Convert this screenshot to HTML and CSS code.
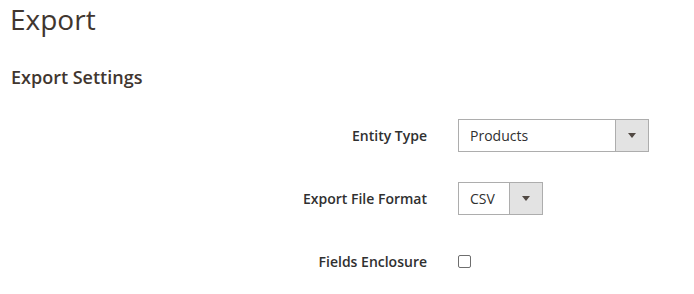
FILE: index.html
```html
<!DOCTYPE html>
<html lang="en">
<head>
    <meta charset="UTF-8">
    <title>Export</title>
    <link rel="stylesheet" href="styles.css">
</head>
<body>
    <h1 class="page-title">Export</h1>
    <div class="settings">
        <div class="legend">Export Settings</div>
        <div class="field">
            <label class="label">Entity Type</label>
            <div class="select select-wide">
                <span class="select-value">Products</span>
                <span class="select-button"><span class="arrow"></span></span>
            </div>
        </div>
        <div class="field">
            <label class="label">Export File Format</label>
            <div class="select select-narrow">
                <span class="select-value">CSV</span>
                <span class="select-button"><span class="arrow"></span></span>
            </div>
        </div>
        <div class="field field-check">
            <label class="label">Fields Enclosure</label>
            <span class="checkbox"></span>
        </div>
    </div>
</body>
</html>
```

FILE: styles.css
```css
body {
    margin: 0;
    padding: 0 10px;
    background-color: #fff;
    font-family: 'Open Sans', 'Liberation Sans', sans-serif;
    color: #303030;
}
.page-title {
    margin: 0;
    padding-top: 1px;
    font-size: 28px;
    font-weight: 400;
    line-height: 36px;
    color: #41362f;
}
.legend {
    margin-top: 28px;
    padding-left: 1px;
    font-size: 18px;
    font-weight: 600;
    line-height: 24px;
    color: #41362f;
}
.field {
    display: flex;
    align-items: center;
    height: 33px;
    margin-top: 30px;
}
.label {
    width: 417px;
    text-align: right;
    font-size: 14px;
    font-weight: 600;
    color: #303030;
    padding-right: 31px;
}
.select {
    display: flex;
    height: 33px;
    box-sizing: border-box;
    border: 1px solid #adadad;
    background-color: #fff;
    font-size: 14px;
    color: #303030;
}
.select-wide {
    width: 191px;
}
.select-narrow {
    width: 85px;
}
.select-value {
    flex: 1;
    padding-left: 11px;
    line-height: 31px;
}
.select-button {
    width: 32px;
    border-left: 1px solid #adadad;
    background-color: #e3e3e3;
    display: flex;
    align-items: center;
    justify-content: center;
}
.arrow {
    width: 0;
    height: 0;
    border-left: 4px solid transparent;
    border-right: 4px solid transparent;
    border-top: 5px solid #514943;
}
.checkbox {
    width: 13px;
    height: 13px;
    box-sizing: border-box;
    border: 1px solid #6e6e6e;
    border-radius: 2px;
    background-color: #fff;
}
```
